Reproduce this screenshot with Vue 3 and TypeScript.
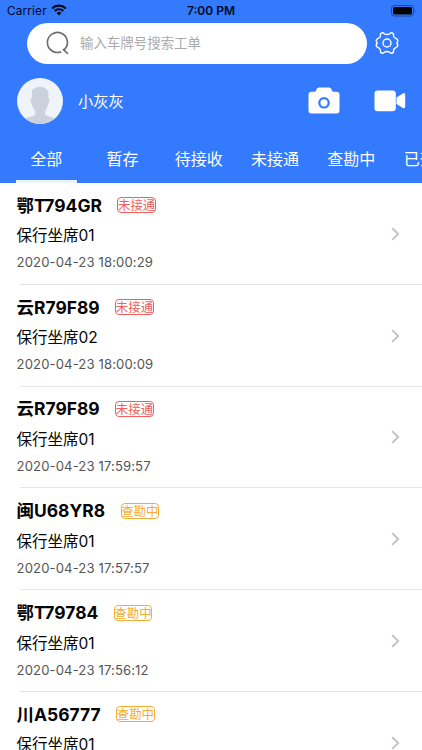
<script setup lang="ts">
interface Order {
  plate: string
  seat: string
  time: string
  status: string
  kind: 'missed' | 'active'
}

const tabs: string[] = ['全部', '暂存', '待接收', '未接通', '查勘中', '已查勘']

const orders: Order[] = [
  { plate: '鄂T794GR', seat: '保行坐席01', time: '2020-04-23 18:00:29', status: '未接通', kind: 'missed' },
  { plate: '云R79F89', seat: '保行坐席02', time: '2020-04-23 18:00:09', status: '未接通', kind: 'missed' },
  { plate: '云R79F89', seat: '保行坐席01', time: '2020-04-23 17:59:57', status: '未接通', kind: 'missed' },
  { plate: '闽U68YR8', seat: '保行坐席01', time: '2020-04-23 17:57:57', status: '查勘中', kind: 'active' },
  { plate: '鄂T79784', seat: '保行坐席01', time: '2020-04-23 17:56:12', status: '查勘中', kind: 'active' },
  { plate: '川A56777', seat: '保行坐席01', time: '2020-04-23 17:55:40', status: '查勘中', kind: 'active' },
]
</script>

<template>
  <div class="screen">
    <header class="header">
      <div class="status-bar">
        <div class="carrier">
          <span>Carrier</span>
          <svg class="wifi" width="16" height="12" viewBox="0 0 16 12">
            <path d="M1.2 4.5a9.7 9.7 0 0 1 13.6 0M3.7 7a6.1 6.1 0 0 1 8.6 0" fill="none" stroke="#020818" stroke-width="2.2" />
            <path d="M5.6 9a3.4 3.4 0 0 1 4.8 0L8 11.5z" fill="#020818" />
          </svg>
        </div>
        <span class="clock">7:00 PM</span>
        <svg class="battery" width="26" height="12" viewBox="0 0 26 12">
          <rect x="0.5" y="0.5" width="22" height="10.5" rx="2.8" fill="none" stroke="#1d468f" />
          <rect x="2" y="2" width="19" height="7.5" rx="1.5" fill="#000" />
          <path d="M24 4q1.3 1.8 0 3.6z" fill="#1d468f" />
        </svg>
      </div>

      <div class="search-row">
        <div class="search">
          <svg width="24" height="24" viewBox="0 0 24 24" fill="none" stroke="#6c6c70" stroke-width="1.6">
            <path d="M15.2 20.7A10 10 0 1 1 18.4 18.6M16.8 18.2L22 22.8" />
          </svg>
          <span>输入车牌号搜索工单</span>
        </div>
        <svg class="gear" width="24" height="24" viewBox="0 0 24 24" fill="none" stroke="#fff" stroke-width="1.4" stroke-linejoin="round">
          <path d="M8.2 1.9Q6.5 1.5 5.5 3L5.4 5Q5.2 6.5 3.7 7L2.4 7.8Q.9 9 1.2 10.2Q2.9 12 1.2 13.8Q.9 15 2.4 16.2L3.7 17Q5.2 17.5 5.4 19L5.5 21Q6.5 22.5 8.2 22.1L9.4 21.2Q12 19.8 14.6 21.2L15.8 22.1Q17.5 22.5 18.5 21L18.6 19Q18.8 17.5 20.3 17L21.6 16.2Q23.1 15 22.8 13.8Q21.1 12 22.8 10.2Q23.1 9 21.6 7.8L20.3 7Q18.8 6.5 18.6 5L18.5 3Q17.5 1.5 15.8 1.9L14.6 2.8Q12 4.2 9.4 2.8Z" />
          <circle cx="12" cy="12" r="4" />
        </svg>
      </div>

      <div class="profile">
        <svg class="avatar" width="46" height="46" viewBox="0 0 46 46">
          <defs>
            <clipPath id="avatar-clip"><circle cx="23" cy="23" r="23" /></clipPath>
          </defs>
          <g clip-path="url(#avatar-clip)">
            <rect width="46" height="46" fill="#eff3fa" />
            <path d="M15 17Q13.5 10.5 18.5 10Q23 7.5 28 10.2Q32.5 12 31.3 20Q33.5 20.5 31.5 26L30.5 28Q29.8 31.5 28 33.5V36Q29 38 36 39.5Q40 41 40 46H6Q6 41 10 39.5Q18 38 18.3 36V33.5Q16.2 31.5 15.5 28L14.5 26Q12.5 21 14.7 20.5Z" fill="#ccd2db" />
          </g>
        </svg>
        <span class="name">小灰灰</span>
        <svg class="camera" width="32" height="27" viewBox="0 0 32 27">
          <path d="M3.5 4.8H6.7Q7.7 4.8 8.1 3.2Q8.8.5 10.8.5H21.2Q23.2.5 23.9 3.2Q24.3 4.8 25.3 4.8H28.5Q31.5 4.8 31.5 8V23.2Q31.5 26.5 28.5 26.5H3.5Q.5 26.5.5 23.2V8Q.5 4.8 3.5 4.8Z" fill="#fff" />
          <circle cx="16" cy="15.8" r="4.7" fill="#fff" stroke="#347aff" stroke-width="2.2" />
        </svg>
        <svg class="video" width="32" height="22" viewBox="0 0 32 22">
          <path d="M3.5.5H18.5Q21.8.5 21.8 3.7V8L28.8 3.4Q31.2 2.4 31.2 5V16.5Q31.2 19 28.8 18L21.8 13.5V18.3Q21.8 21.3 18.5 21.3H3.5Q.5 21.3.5 18.3V3.7Q.5.5 3.5.5Z" fill="#fff" />
          <path d="M22.2 8V13.5" stroke="#347aff" stroke-width=".7" />
        </svg>
      </div>

      <nav class="tabs">
        <div v-for="(tab, i) in tabs" :key="tab" class="tab" :class="{ selected: i === 0 }">{{ tab }}</div>
      </nav>
    </header>

    <main class="list">
      <article v-for="(order, i) in orders" :key="i" class="order">
        <div class="details">
          <div class="heading">
            <span class="plate">{{ order.plate }}</span>
            <span class="badge" :class="order.kind">{{ order.status }}</span>
          </div>
          <div class="seat">{{ order.seat }}</div>
          <div class="time">{{ order.time }}</div>
        </div>
        <svg class="chevron" width="9" height="14" viewBox="0 0 9 14">
          <path d="M1.2 1.2L7.2 7L1.2 12.8" fill="none" stroke="#c0c0c3" stroke-width="1.8" />
        </svg>
      </article>
    </main>
  </div>
</template>

<style>
body {
  background: #fff;
}
</style>

<style scoped>
.screen {
  width: 422px;
  height: 750px;
  overflow: hidden;
  background: #fff;
  color: #050505;
  font-family: Inter, "Noto Sans CJK SC", sans-serif;
}

.screen * {
  box-sizing: border-box;
}

svg {
  display: block;
  flex: none;
}

.header {
  height: 183px;
  background: #347aff;
  color: #fff;
}

.status-bar {
  display: grid;
  grid-template-columns: 1fr auto 1fr;
  height: 22px;
  padding: 0 5px 0 7px;
  color: #020818;
  font-size: 12px;
  line-height: 22px;
}

.carrier {
  display: flex;
  gap: 4px;
  font-size: 11.8px;
  letter-spacing: 0.15px;
}

.wifi {
  margin-top: 4px;
}

.clock {
  margin-left: -2px;
  font-weight: 600;
}

.battery {
  justify-self: end;
  margin-top: 5px;
}

.search-row {
  display: flex;
  align-items: center;
  height: 42px;
  padding-left: 27px;
}

.search {
  display: flex;
  align-items: center;
  gap: 10px;
  width: 340px;
  height: 41px;
  padding-left: 19px;
  border-radius: 21px;
  background: #fff;
  color: #aaa;
  font-size: 13.45px;
}

.search span {
  margin-top: -2px;
}

.gear {
  margin-left: 8px;
}

.profile {
  display: flex;
  align-items: center;
  height: 75px;
  padding: 0 16px 1px 16.5px;
}

.name {
  flex: 1;
  margin: -3px 0 0 15.5px;
  font-size: 15.3px;
}

.camera {
  margin-top: -1px;
}

.video {
  margin-left: 34px;
}

.tabs {
  display: flex;
  height: 44px;
  padding-left: 8px;
  overflow: hidden;
}

.tab {
  position: relative;
  flex: 0 0 76.3px;
  font-size: 16px;
  line-height: 41px;
  text-align: center;
  white-space: nowrap;
}

.selected::after {
  position: absolute;
  right: 7.4px;
  bottom: 0;
  left: 7.6px;
  height: 3px;
  background: #eaf1ff;
  content: "";
}

.order {
  display: flex;
  align-items: center;
  justify-content: space-between;
  height: 101.8px;
  padding: 0 22px 0 16.6px;
  background: linear-gradient(#e6e6e8, #e6e6e8) 20px 100% / 402px 1px no-repeat;
}

.details {
  height: 91px;
}

.heading {
  display: flex;
  align-items: center;
  gap: 15.5px;
  height: 34px;
}

.plate {
  padding-top: 1px;
  font-size: 17.45px;
  font-weight: 700;
  line-height: 34px;
}

.badge {
  display: flex;
  justify-content: center;
  width: 38.5px;
  height: 16px;
  border: 1px solid currentColor;
  border-radius: 4px;
  font-size: 12.4px;
  line-height: 15px;
  white-space: nowrap;
}

.missed {
  color: #f0605c;
}

.active {
  color: #f5ac32;
}

.seat {
  height: 26px;
  font-size: 15.5px;
  line-height: 27.4px;
}

.time {
  height: 28px;
  color: #555;
  font-size: 13.1px;
  line-height: 28px;
  letter-spacing: 0.12px;
}
</style>
